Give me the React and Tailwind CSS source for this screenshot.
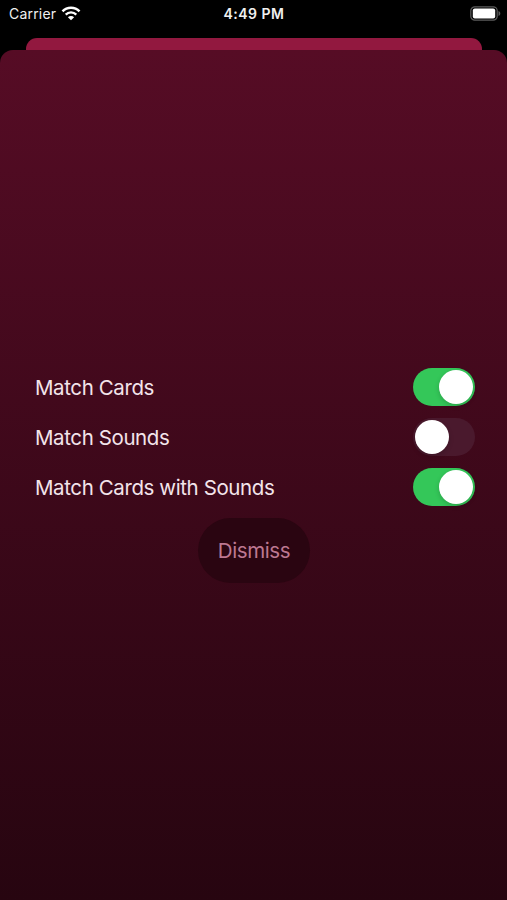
import { useState } from "react";

const OPTIONS = [
  { id: "cards", label: "Match Cards", on: true },
  { id: "sounds", label: "Match Sounds", on: false },
  { id: "both", label: "Match Cards with Sounds", on: true },
];

function WifiIcon() {
  return (
    <svg width="20" height="15" viewBox="0 0 20 15" fill="none">
      <path d="M1.5 5.3a12 12 0 0 1 17 0" stroke="#fff" strokeWidth="2.6" />
      <path d="M4.7 8.6a7.5 7.5 0 0 1 10.6 0" stroke="#fff" strokeWidth="2.3" />
      <path d="M10 14.3 6.9 11.2a4.4 4.4 0 0 1 6.2 0z" fill="#fff" />
    </svg>
  );
}

function BatteryIcon() {
  return (
    <svg width="31" height="15" viewBox="0 0 31 15" fill="none">
      <rect x="0.8" y="0.8" width="26.4" height="13.4" rx="4" stroke="#5c5c5c" strokeWidth="1.2" />
      <rect x="2.8" y="2.6" width="22.4" height="9.8" rx="2" fill="#fff" />
      <path d="M28.5 5v5c1.2-.5 1.8-1.4 1.8-2.5S29.7 5.5 28.5 5z" fill="#5c5c5c" />
    </svg>
  );
}

function StatusBar() {
  return (
    <div className="grid h-[38px] grid-cols-3 px-[9px] pt-[3px] text-[#f0f0f0]">
      <div className="flex h-[21px] items-center gap-[5px] text-[14px] tracking-[0.2px]">
        <span>Carrier</span>
        <WifiIcon />
      </div>
      <div className="flex h-[21px] items-center justify-center pl-px text-[14px] font-semibold tracking-[0.5px]">
        4:49 PM
      </div>
      <div className="mr-[-3px] flex h-[20px] items-center justify-end">
        <BatteryIcon />
      </div>
    </div>
  );
}

function Toggle({ on, label, onChange }) {
  return (
    <button
      type="button"
      role="switch"
      aria-checked={on}
      aria-label={label}
      onClick={onChange}
      className={`flex h-[38px] w-[62px] items-center rounded-full px-[2px] ${
        on ? "justify-end bg-[#34c759]" : "justify-start bg-[#4a192d]"
      }`}
    >
      <span className="size-[34px] rounded-full bg-white shadow-[0_2px_5px_rgba(0,0,0,0.18)]" />
    </button>
  );
}

export default function App() {
  const [options, setOptions] = useState(OPTIONS);

  const handleToggle = (id) => {
    setOptions(options.map((o) => (o.id === id ? { ...o, on: !o.on } : o)));
  };

  return (
    <div className="flex h-screen flex-col overflow-hidden bg-black font-['Inter',sans-serif]">
      <StatusBar />

      {/* card behind the sheet */}
      <div className="mr-[25px] ml-[26px] h-3 shrink-0 rounded-t-[11px] bg-[#92183f]" />

      <div className="flex flex-1 flex-col items-center rounded-t-[13px] bg-linear-to-b from-[#560c25] to-[#270510] pt-[312px]">
        <ul className="w-full pr-8 pl-[35px]">
          {options.map((o) => (
            <li key={o.id} className="flex h-[50px] items-center justify-between">
              <span className="pt-[2px] text-[20.5px] tracking-[-0.4px] text-[#f3e4ea]">{o.label}</span>
              <Toggle on={o.on} label={o.label} onChange={() => handleToggle(o.id)} />
            </li>
          ))}
        </ul>

        <button
          type="button"
          className="mt-[6px] h-[65px] w-[112px] rounded-full bg-[#2a0511] pt-px pl-px text-[20.5px] tracking-[-0.4px] text-[#bd7891]"
        >
          Dismiss
        </button>
      </div>
    </div>
  );
}
